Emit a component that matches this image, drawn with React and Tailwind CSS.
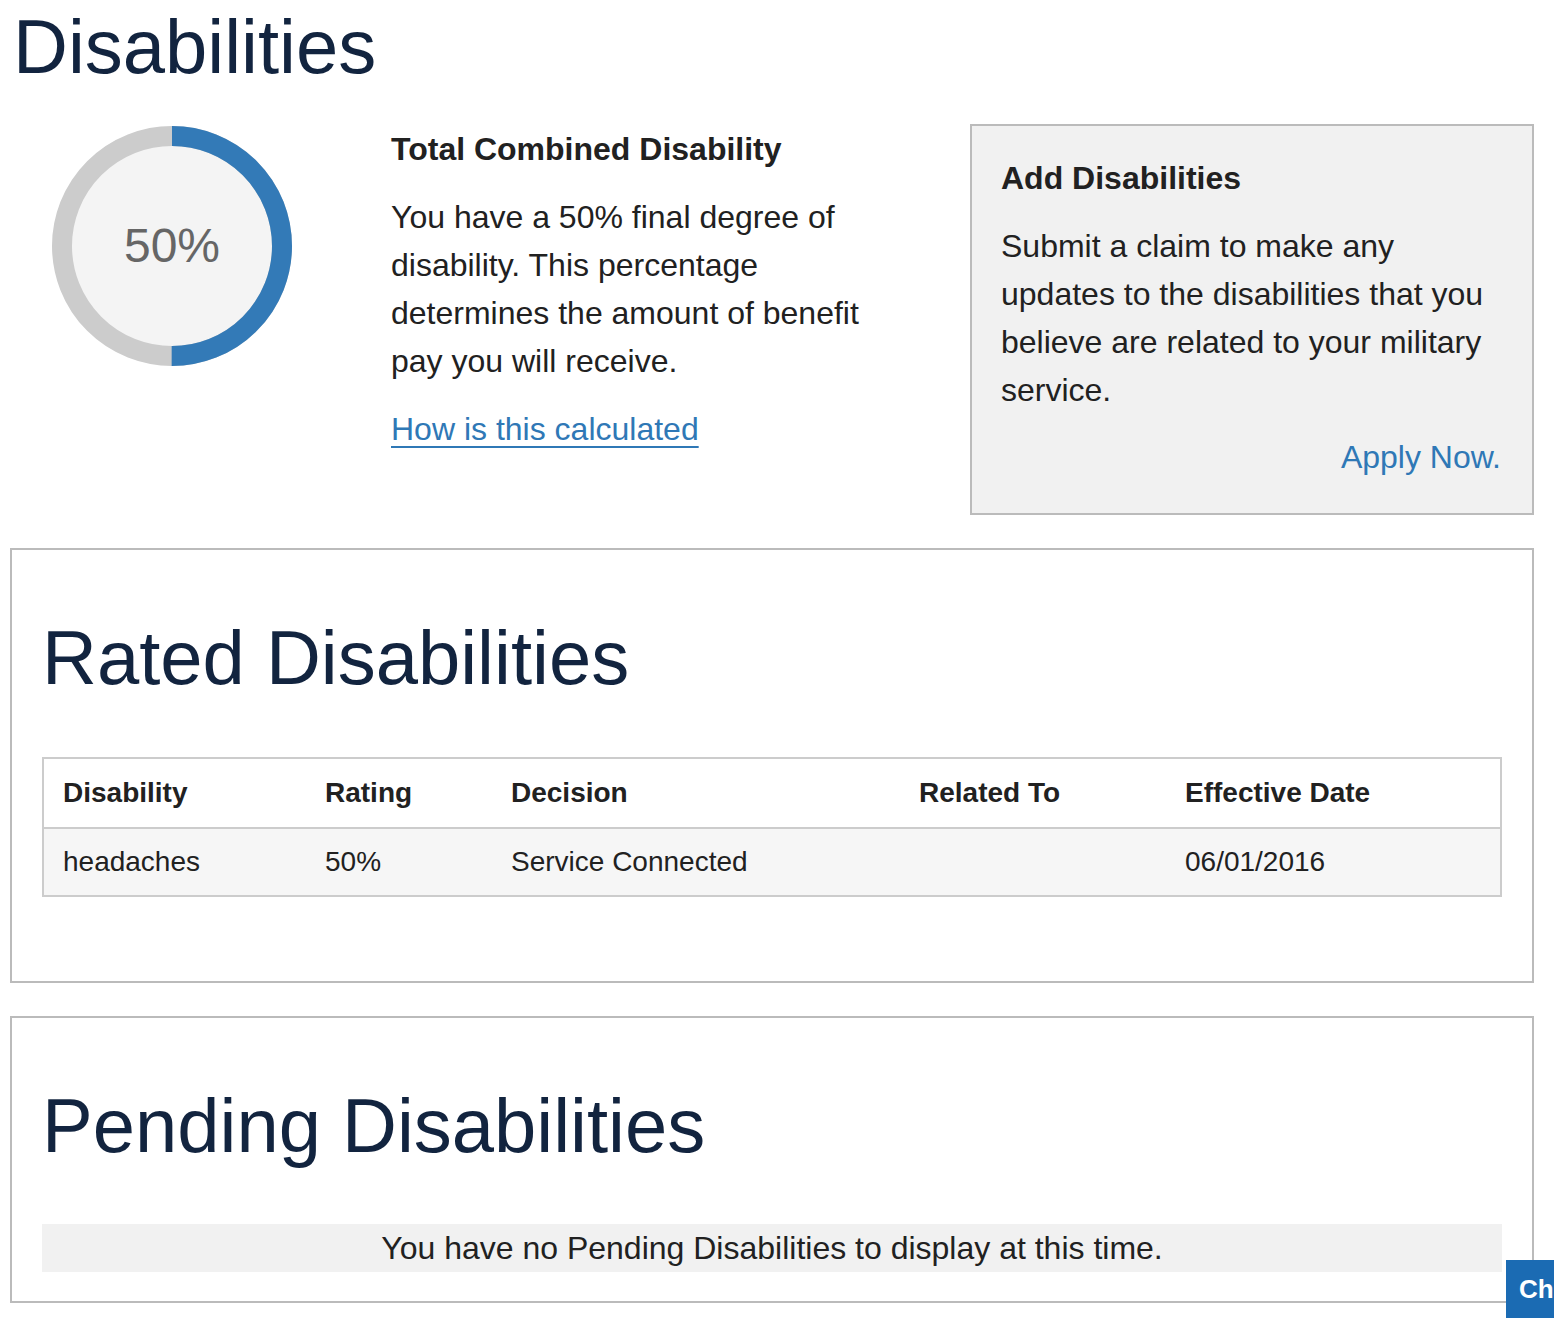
import React from 'react';

const columns = [
  { key: 'name', label: 'Disability' },
  { key: 'rating', label: 'Rating' },
  { key: 'decision', label: 'Decision' },
  { key: 'related', label: 'Related To' },
  { key: 'date', label: 'Effective Date' },
];

const ratedDisabilities = [
  { name: 'headaches', rating: '50%', decision: 'Service Connected', related: '', date: '06/01/2016' },
];

// donut showing the combined rating
const RatingCircle = ({ percent }) => {
  const r = 110;
  const circumference = 2 * Math.PI * r;
  return (
    <div className="relative w-[240px] h-[240px]">
      <svg width="240" height="240" viewBox="0 0 240 240">
        <circle cx="120" cy="120" r="110" fill="#f4f4f4" stroke="#cccccc" strokeWidth="20" />
        <circle
          cx="120"
          cy="120"
          r="110"
          fill="none"
          stroke="#337ab7"
          strokeWidth="20"
          strokeDasharray={`${(circumference * percent) / 100} ${circumference}`}
          transform="rotate(-90 120 120)"
        />
      </svg>
      <div className="absolute inset-0 flex items-center justify-center text-[48px] text-[#666666]">
        {percent}%
      </div>
    </div>
  );
};

const Section = ({ title, children, bottom }) => (
  <section className={`border-2 border-[#bbbbbb] px-[30px] pt-[66px] ${bottom}`}>
    <h2 className="text-[76px] leading-[84px] text-[#12243f]">{title}</h2>
    {children}
  </section>
);

export default function App() {
  return (
    <div
      className="w-[1554px] min-h-[1318px] bg-white text-[#212121] pl-[10px] pr-[20px]"
      style={{ fontFamily: '"Liberation Sans", Arial, Helvetica, sans-serif' }}
    >
      <h1 className="pt-[5px] text-[76px] leading-[84px] text-[#12243f] ml-[3px]">Disabilities</h1>

      {/* Summary row */}
      <div className="mt-[35px] flex items-start">
        <div className="w-[380px] pl-[42px] pt-[2px]">
          <RatingCircle percent={50} />
        </div>
        <div className="w-[500px] pl-[1px] pt-[1px]">
          <h3 className="text-[32px] leading-[48px] font-bold">Total Combined Disability</h3>
          <p className="mt-[20px] text-[32px] leading-[48px]">
            You have a 50% final degree of disability. This percentage determines the amount of benefit pay you will receive.
          </p>
          <a href="#" className="mt-[20px] inline-block text-[32px] leading-[48px] text-[#2f78b6] underline underline-offset-[6px] decoration-2">
            How is this calculated
          </a>
        </div>
        <div className="ml-auto w-[564px] border-2 border-[#bbbbbb] bg-[#f1f1f1] px-[29px] pt-[28px] pb-[32px]">
          <h3 className="text-[32px] leading-[48px] font-bold">Add Disabilities</h3>
          <p className="mt-[20px] text-[32px] leading-[48px]">
            Submit a claim to make any updates to the disabilities that you believe are related to your military service.
          </p>
          <div className="mt-[19px] text-right text-[32px] leading-[48px]">
            <a href="#" className="text-[#2f78b6] pr-[2px]">Apply Now.</a>
          </div>
        </div>
      </div>

      <div className="mt-[33px]">
        <Section title="Rated Disabilities" bottom="pb-[84px]">
          <div className="mt-[57px] border-2 border-[#cccccc] text-[28px]">
            <div className="grid grid-cols-[262px_186px_408px_266px_1fr] h-[70px] items-center border-b-2 border-[#cccccc] bg-white font-bold">
              {columns.map((col) => (
                <div key={col.key} className="px-[19px]">{col.label}</div>
              ))}
            </div>
            {ratedDisabilities.map((row, i) => (
              <div key={i} className="grid grid-cols-[262px_186px_408px_266px_1fr] h-[66px] items-center bg-[#f6f6f6]">
                {columns.map((col) => (
                  <div key={col.key} className="px-[19px]">{row[col.key]}</div>
                ))}
              </div>
            ))}
          </div>
        </Section>
      </div>

      <div className="mt-[33px]">
        <Section title="Pending Disabilities" bottom="pb-[29px]">
          <div className="mt-[56px] h-[48px] bg-[#f1f1f1] text-center text-[32px] leading-[48px]">
            You have no Pending Disabilities to display at this time.
          </div>
        </Section>
      </div>

      {/* chat tab, only its first letters are inside the window */}
      <div className="fixed left-[1506px] top-[1260px] w-[48px] h-[58px] bg-[#1b6bb3]">
        <span className="block pl-[13px] pt-[13px] text-[26px] font-bold text-white leading-[32px]">Ch</span>
      </div>
    </div>
  );
}
